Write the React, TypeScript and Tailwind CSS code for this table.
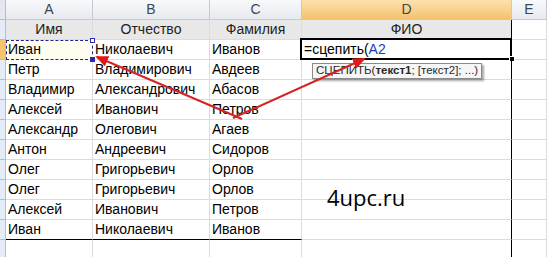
import React from "react"

const cols = ["A", "B", "C", "D", "E"]
const widths = ["w-[87px]", "w-[117px]", "w-[92px]", "w-[210px]", "flex-1"]

const people = [
  ["Иван", "Николаевич", "Иванов"],
  ["Петр", "Владимирович", "Авдеев"],
  ["Владимир", "Александрович", "Абасов"],
  ["Алексей", "Иванович", "Петров"],
  ["Александр", "Олегович", "Агаев"],
  ["Антон", "Андреевич", "Сидоров"],
  ["Олег", "Григорьевич", "Орлов"],
  ["Олег", "Григорьевич", "Орлов"],
  ["Алексей", "Иванович", "Петров"],
  ["Иван", "Николаевич", "Иванов"],
]

function Cell({ w, children, className = "" }: { w: string; children?: React.ReactNode; className?: string }) {
  return (
    <div className={`${w} h-[20px] shrink-0 border-r border-b border-[#dadcdd] flex items-center px-[2px] overflow-visible whitespace-nowrap ${className}`}>
      {children}
    </div>
  )
}

export default function App() {
  return (
    <div className="relative w-[547px] h-[257px] overflow-hidden bg-white text-[14px] text-black" style={{ fontFamily: '"Liberation Sans", Arial, sans-serif' }}>
      {/* column headers */}
      <div className="flex h-[20px]">
        <div className="w-[6px] shrink-0 border-r border-b border-[#b7bdc6] bg-[#e4e8ee]" />
        {cols.map((c, i) => (
          <div
            key={c}
            className={`${widths[i]} shrink-0 h-[20px] flex items-center justify-center border-r border-b border-[#c5cad1] text-[#3d4652] ${
              c === "D" ? "bg-gradient-to-b from-[#fbe2ae] to-[#f4c26a]" : "bg-gradient-to-b from-[#f8f9fb] to-[#e6e9ee]"
            }`}
          >
            {c}
          </div>
        ))}
      </div>

      {/* header row */}
      <div className="flex">
        <div className="w-[6px] shrink-0 h-[20px] border-r border-b border-[#b7bdc6] bg-[#e4ecf7]" />
        <Cell w={widths[0]} className="justify-center bg-[#e8e8e8] text-[#222]">Имя</Cell>
        <Cell w={widths[1]} className="justify-center bg-[#e8e8e8] text-[#222]">Отчество</Cell>
        <Cell w={widths[2]} className="justify-center bg-[#e8e8e8] text-[#222]">Фамилия</Cell>
        <Cell w={widths[3]} className="justify-center bg-[#e8e8e8] text-[#222] !border-r-black !border-b-black">ФИО</Cell>
        <Cell w={widths[4]} />
      </div>

      {people.map((p, r) => (
        <div key={r} className="flex">
          <div className={`w-[6px] shrink-0 h-[20px] border-r border-b border-[#b7bdc6] ${r === 0 ? "bg-[#f6c36e]" : "bg-[#e4ecf7]"}`} />
          {p.map((v, i) => (
            <Cell key={i} w={widths[i]} className={r === 9 ? "!border-b-black" : ""}>
              {r === 0 && i === 0 ? (
                <div className="relative w-full h-full flex items-center">
                  <div className="absolute -left-[2px] -right-[3px] top-0 -bottom-px border border-dashed border-[#20208a] bg-[#fffdf0]" />
                  <span className="relative">{v}</span>
                  <div className="absolute -right-[5px] -top-[2px] w-[5px] h-[5px] border border-[#2a2ab0] bg-white" />
                  <div className="absolute -right-[5px] -bottom-[3px] w-[5px] h-[5px] bg-[#2a2ab0]" />
                </div>
              ) : (
                v
              )}
            </Cell>
          ))}
          <Cell w={widths[3]} className="!border-r-black relative">
            {r === 0 && (
              <>
                <div className="absolute -left-[2px] -right-px -top-[2px] -bottom-px border-2 border-black" />
                <span className="relative">=сцепить(<span className="text-[#2038c0]">A2</span></span>
                <div className="absolute -right-[4px] -bottom-[3px] w-[6px] h-[6px] bg-black border border-white" />
              </>
            )}
          </Cell>
          <Cell w={widths[4]} />
        </div>
      ))}

      <div className="flex">
        <div className="w-[6px] shrink-0 h-[20px] border-r border-b border-[#b7bdc6] bg-[#e4ecf7]" />
        <Cell w={widths[0]} />
        <Cell w={widths[1]} />
        <Cell w={widths[2]} />
        <Cell w={widths[3]} className="!border-r-black" />
        <Cell w={widths[4]} />
      </div>

      {/* function tooltip */}
      <div className="absolute left-[312px] top-[63px] h-[16px] px-[3px] flex items-center border border-[#8a8a8a] bg-[#f6f6f6] text-[11.5px] text-[#2a2a2a] shadow-[2px_2px_2px_rgba(0,0,0,0.35)] whitespace-nowrap">
        СЦЕПИТЬ(<b>текст1</b>; [текст2]; ...)
      </div>

      {/* watermark */}
      <div className="absolute left-[327px] top-[181px] text-[22px] text-black" style={{ fontFamily: '"Open Sans", sans-serif' }}>
        4upc.ru
      </div>

      {/* arrows */}
      <svg className="absolute inset-0 pointer-events-none" width="547" height="257">
        <defs>
          <marker id="ah" markerWidth="13" markerHeight="11" refX="11" refY="5.5" orient="auto" markerUnits="userSpaceOnUse">
            <path d="M0,0 L13,5.5 L0,11 Z" fill="#e01818" />
          </marker>
        </defs>
        <line x1="242" y1="119" x2="97" y2="57" stroke="#d42424" strokeWidth="2" markerEnd="url(#ah)" />
        <line x1="233" y1="118" x2="364" y2="59" stroke="#d42424" strokeWidth="2" markerEnd="url(#ah)" />
      </svg>
    </div>
  )
}
